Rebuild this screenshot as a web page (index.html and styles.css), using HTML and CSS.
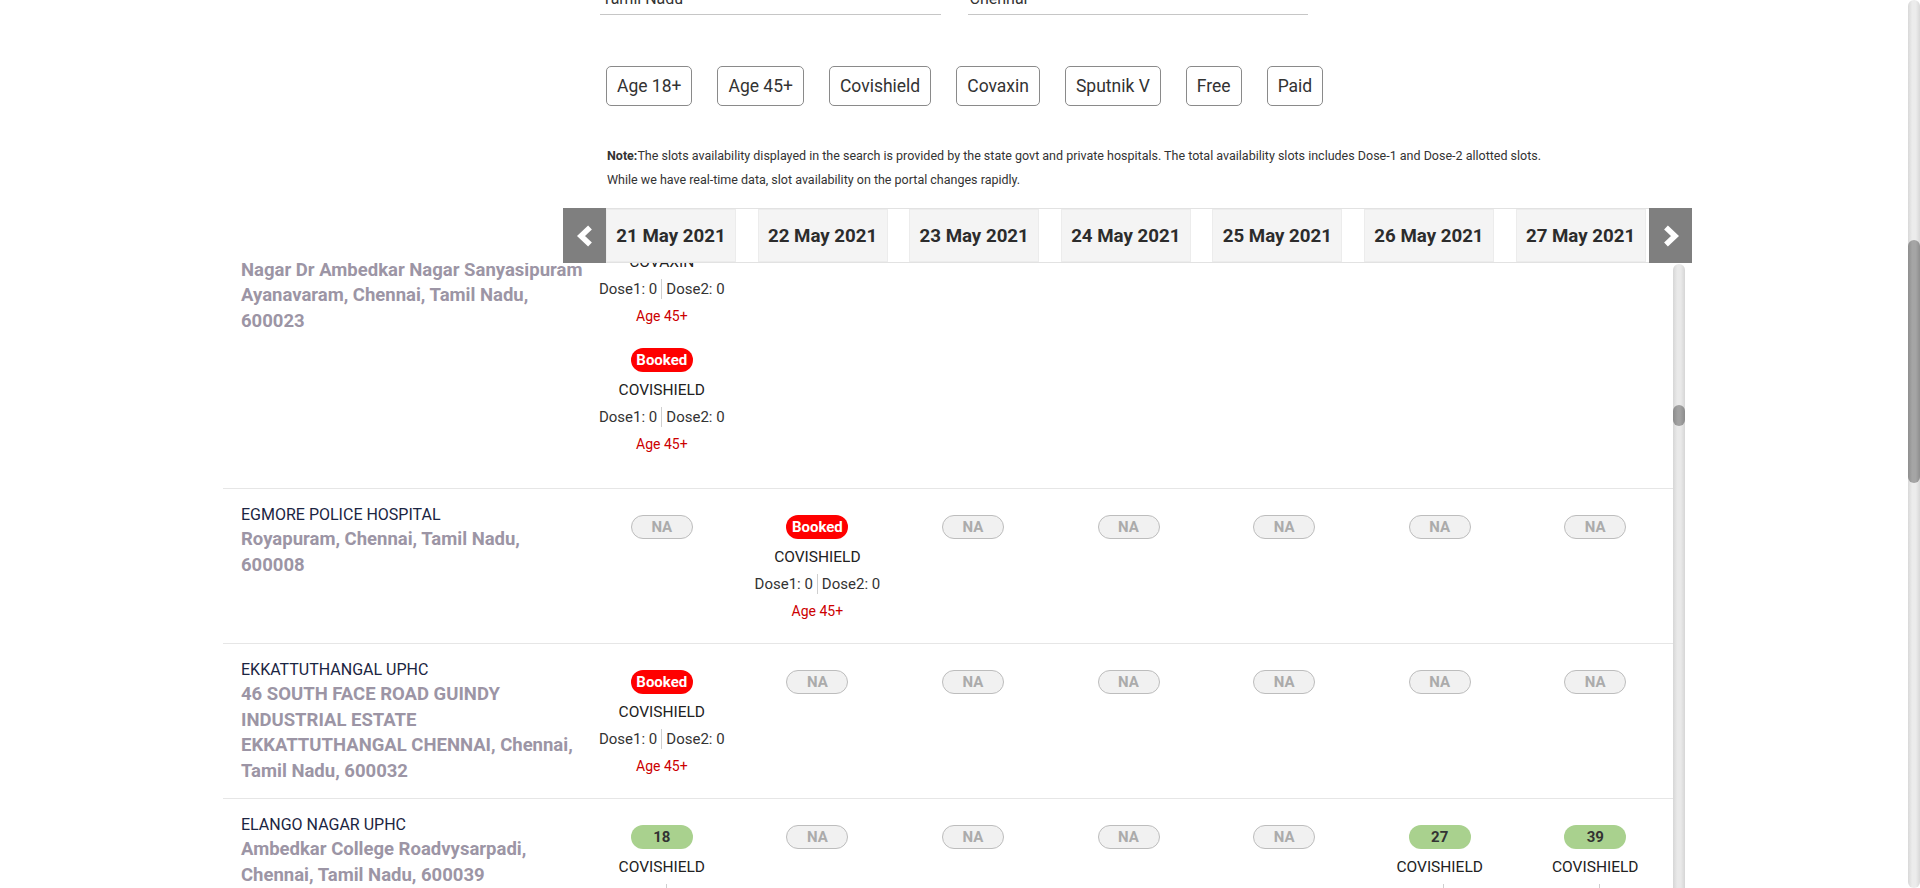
FILE: index.html
```html
<!DOCTYPE html>
<html lang="en">
<head>
<meta charset="utf-8">
<title>Vaccination slots</title>
<link rel="stylesheet" href="styles.css">
</head>
<body>
<div class="viewport">
  <div class="page">
    <div class="container">
      <div class="search">
        <div class="fields">
          <div class="field">Tamil Nadu</div>
          <div class="field">Chennai</div>
        </div>
        <div class="filters">
          <button class="filter">Age 18+</button>
          <button class="filter">Age 45+</button>
          <button class="filter">Covishield</button>
          <button class="filter">Covaxin</button>
          <button class="filter">Sputnik V</button>
          <button class="filter">Free</button>
          <button class="filter">Paid</button>
        </div>
        <div class="note">
          <p><b>Note:</b>The slots availability displayed in the search is provided by the state govt and private hospitals. The total availability slots includes Dose-1 and Dose-2 allotted slots.</p>
          <p>While we have real-time data, slot availability on the portal changes rapidly.</p>
        </div>
      </div>

      <div class="date-bar">
        <div class="arrow"><svg width="18" height="22" viewBox="0 0 18 22"><polyline points="14,2.5 5,11 14,19.5" fill="none" stroke="#fff" stroke-width="5.5"/></svg></div>
        <div class="slides">
          <div class="slide"><div class="tab">21 May 2021</div></div>
          <div class="slide"><div class="tab">22 May 2021</div></div>
          <div class="slide"><div class="tab">23 May 2021</div></div>
          <div class="slide"><div class="tab">24 May 2021</div></div>
          <div class="slide"><div class="tab">25 May 2021</div></div>
          <div class="slide"><div class="tab">26 May 2021</div></div>
          <div class="slide"><div class="tab">27 May 2021</div></div>
        </div>
        <div class="arrow"><svg width="18" height="22" viewBox="0 0 18 22"><polyline points="4,2.5 13,11 4,19.5" fill="none" stroke="#fff" stroke-width="5.5"/></svg></div>
      </div>

      <div class="table-body">
        <div class="rows">
          <div class="rows-inner">

            <div class="row row-first">
              <div class="hosp">
                <div class="hosp-name">AYANAVARAM UPHC</div>
                <div class="hosp-addr">No 42 Dr Ambedkar Street<br>Nagar Dr Ambedkar Nagar Sanyasipuram<br>Ayanavaram, Chennai, Tamil Nadu,<br>600023</div>
              </div>
              <div class="slot">
                <div class="session">
                  <div class="badge badge-booked">Booked</div>
                  <div class="vac">COVAXIN</div>
                  <div class="dose"><span>Dose1: 0</span><span class="sep">Dose2: 0</span></div>
                  <div class="age">Age 45+</div>
                </div>
                <div class="session">
                  <div class="badge badge-booked">Booked</div>
                  <div class="vac">COVISHIELD</div>
                  <div class="dose"><span>Dose1: 0</span><span class="sep">Dose2: 0</span></div>
                  <div class="age">Age 45+</div>
                </div>
              </div>
              <div class="slot"><div class="badge badge-na">NA</div></div>
              <div class="slot"><div class="badge badge-na">NA</div></div>
              <div class="slot"><div class="badge badge-na">NA</div></div>
              <div class="slot"><div class="badge badge-na">NA</div></div>
              <div class="slot"><div class="badge badge-na">NA</div></div>
              <div class="slot"><div class="badge badge-na">NA</div></div>
            </div>

            <div class="row">
              <div class="hosp">
                <div class="hosp-name">EGMORE POLICE HOSPITAL</div>
                <div class="hosp-addr">Royapuram, Chennai, Tamil Nadu,<br>600008</div>
              </div>
              <div class="slot"><div class="badge badge-na">NA</div></div>
              <div class="slot">
                <div class="session">
                  <div class="badge badge-booked">Booked</div>
                  <div class="vac">COVISHIELD</div>
                  <div class="dose"><span>Dose1: 0</span><span class="sep">Dose2: 0</span></div>
                  <div class="age">Age 45+</div>
                </div>
              </div>
              <div class="slot"><div class="badge badge-na">NA</div></div>
              <div class="slot"><div class="badge badge-na">NA</div></div>
              <div class="slot"><div class="badge badge-na">NA</div></div>
              <div class="slot"><div class="badge badge-na">NA</div></div>
              <div class="slot"><div class="badge badge-na">NA</div></div>
            </div>

            <div class="row">
              <div class="hosp">
                <div class="hosp-name">EKKATTUTHANGAL UPHC</div>
                <div class="hosp-addr">46 SOUTH FACE ROAD GUINDY<br>INDUSTRIAL ESTATE<br>EKKATTUTHANGAL CHENNAI, Chennai,<br>Tamil Nadu, 600032</div>
              </div>
              <div class="slot">
                <div class="session">
                  <div class="badge badge-booked">Booked</div>
                  <div class="vac">COVISHIELD</div>
                  <div class="dose"><span>Dose1: 0</span><span class="sep">Dose2: 0</span></div>
                  <div class="age">Age 45+</div>
                </div>
              </div>
              <div class="slot"><div class="badge badge-na">NA</div></div>
              <div class="slot"><div class="badge badge-na">NA</div></div>
              <div class="slot"><div class="badge badge-na">NA</div></div>
              <div class="slot"><div class="badge badge-na">NA</div></div>
              <div class="slot"><div class="badge badge-na">NA</div></div>
              <div class="slot"><div class="badge badge-na">NA</div></div>
            </div>

            <div class="row">
              <div class="hosp">
                <div class="hosp-name">ELANGO NAGAR UPHC</div>
                <div class="hosp-addr">Ambedkar College Roadvysarpadi,<br>Chennai, Tamil Nadu, 600039</div>
              </div>
              <div class="slot">
                <div class="session">
                  <div class="badge badge-count">18</div>
                  <div class="vac">COVISHIELD</div>
                  <div class="dose"><span>Dose1: 18</span><span class="sep">Dose2: 0</span></div>
                  <div class="age">Age 18+</div>
                </div>
              </div>
              <div class="slot"><div class="badge badge-na">NA</div></div>
              <div class="slot"><div class="badge badge-na">NA</div></div>
              <div class="slot"><div class="badge badge-na">NA</div></div>
              <div class="slot"><div class="badge badge-na">NA</div></div>
              <div class="slot">
                <div class="session">
                  <div class="badge badge-count">27</div>
                  <div class="vac">COVISHIELD</div>
                  <div class="dose"><span>Dose1: 27</span><span class="sep">Dose2: 0</span></div>
                  <div class="age">Age 18+</div>
                </div>
              </div>
              <div class="slot">
                <div class="session">
                  <div class="badge badge-count">39</div>
                  <div class="vac">COVISHIELD</div>
                  <div class="dose"><span>Dose1: 39</span><span class="sep">Dose2: 0</span></div>
                  <div class="age">Age 18+</div>
                </div>
              </div>
            </div>

          </div>
        </div>
        <div class="iscroll"><div class="ithumb"></div></div>
      </div>
    </div>
  </div>
  <div class="pscroll"><div class="pthumb"></div></div>
</div>
</body>
</html>
```

FILE: styles.css
```css
html, body {
  margin: 0;
  height: 100%;
  overflow: hidden;
  background: #fff;
}
body {
  font-family: Roboto, "Noto Sans", "Liberation Sans", sans-serif;
  color: #333;
}
.viewport {
  display: flex;
  height: 888px;
}
.page {
  flex: 1;
  min-width: 0;
  overflow: hidden;
}
.pscroll {
  width: 12px;
  flex: none;
  height: 888px;
  border-radius: 6px;
  background: linear-gradient(to right, #d8d8d8, #ececec 35%, #ececec 65%, #d8d8d8);
}
.pthumb {
  margin-top: 240px;
  height: 243px;
  border-radius: 6px;
  background: linear-gradient(to right, #8e8e8e, #a5a5a5 35%, #a5a5a5 65%, #8e8e8e);
}

.container {
  width: 1462px;
  margin: 0 auto;
}
.search {
  width: 708px;
  margin: -11px auto 0;
}
.fields {
  display: flex;
  gap: 27px;
}
.field {
  flex: 1;
  font-size: 16px;
  line-height: 20px;
  padding: 0 2px 5px;
  border-bottom: 1px solid #c6c6c6;
  color: #333;
}
.filters {
  display: flex;
  gap: 25px;
  margin: 51px 0 0 6px;
}
.filter {
  height: 40px;
  box-sizing: border-box;
  padding: 0 10px;
  border: 1px solid #8a8a8a;
  border-radius: 5px;
  background: #fff;
  font-family: Roboto, "Noto Sans", sans-serif;
  font-size: 17.5px;
  color: #333;
  white-space: nowrap;
}
.note {
  margin: 38px 0 0 7px;
  font-size: 12.5px;
  line-height: 24px;
  color: #333;
}
.note p {
  margin: 0;
  white-space: nowrap;
}

.date-bar {
  display: flex;
  width: 1129px;
  height: 55px;
  margin: 16px 0 0 340px;
}
.arrow {
  width: 43px;
  flex: none;
  background: #7f7f7f;
  display: flex;
  align-items: center;
  justify-content: center;
}
.slides {
  flex: 1;
  display: flex;
  overflow: hidden;
  border-top: 1px solid #e2e2e2;
  border-bottom: 1px solid #e2e2e2;
}
.slide {
  flex: none;
  width: 151.6px;
}
.tab {
  width: 130px;
  height: 100%;
  box-sizing: border-box;
  background: #f4f4f4;
  border: 1px solid #ececec;
  display: flex;
  align-items: center;
  justify-content: center;
  font-size: 18.7px;
  font-weight: 700;
  color: #2c2c2c;
  white-space: nowrap;
}

.table-body {
  display: flex;
  height: 660px;
}
.rows {
  flex: 1;
  min-width: 0;
  overflow: hidden;
}
.rows-inner {
  margin-top: -69px;
}
.iscroll {
  width: 12px;
  flex: none;
  margin-top: 1px;
  border-radius: 6px;
  background: linear-gradient(to right, #d6d6d6, #e9e9e9 35%, #e9e9e9 65%, #d6d6d6);
}
.ithumb {
  margin-top: 141px;
  height: 21px;
  border-radius: 6px;
  background: linear-gradient(to right, #8c8c8c, #a2a2a2 40%, #a2a2a2 60%, #8c8c8c);
}

.row {
  display: flex;
  min-height: 155px;
  box-sizing: border-box;
  border-bottom: 1px solid #e6e6e6;
}
.hosp {
  width: 361px;
  flex: none;
  box-sizing: border-box;
  padding: 14px 0 0 18px;
}
.hosp-name {
  font-size: 16px;
  line-height: 24px;
  color: #1b2542;
}
.hosp-addr {
  font-size: 18.5px;
  line-height: 25.5px;
  font-weight: 700;
  color: #9c95a5;
  white-space: nowrap;
}
.slot {
  flex: 1;
  min-width: 0;
  text-align: center;
  padding: 26px 0 14px;
}
.row-first .slot {
  padding-bottom: 30px;
}
.session + .session {
  margin-top: 18px;
}
.badge {
  display: flex;
  align-items: center;
  justify-content: center;
  width: 62px;
  height: 24px;
  margin: 0 auto;
  box-sizing: border-box;
  border-radius: 12px;
  font-size: 15px;
  font-weight: 700;
}
.session .badge {
  margin-bottom: 5px;
}
.badge-booked {
  background: #ff0000;
  color: #fff;
}
.badge-na {
  background: #f1f1f1;
  border: 1px solid #bdbdbd;
  color: #ababab;
}
.badge-count {
  background: #a9d18e;
  color: #333;
}
.vac {
  font-size: 15.5px;
  line-height: 27px;
  color: #222;
}
.dose {
  font-size: 15px;
  line-height: 27px;
  color: #333;
  white-space: nowrap;
}
.dose .sep {
  display: inline-block;
  line-height: 20px;
  margin-left: 4px;
  padding-left: 4px;
  border-left: 1px solid #cfcfcf;
}
.age {
  font-size: 14px;
  line-height: 27px;
  color: #cc0000;
}
```
